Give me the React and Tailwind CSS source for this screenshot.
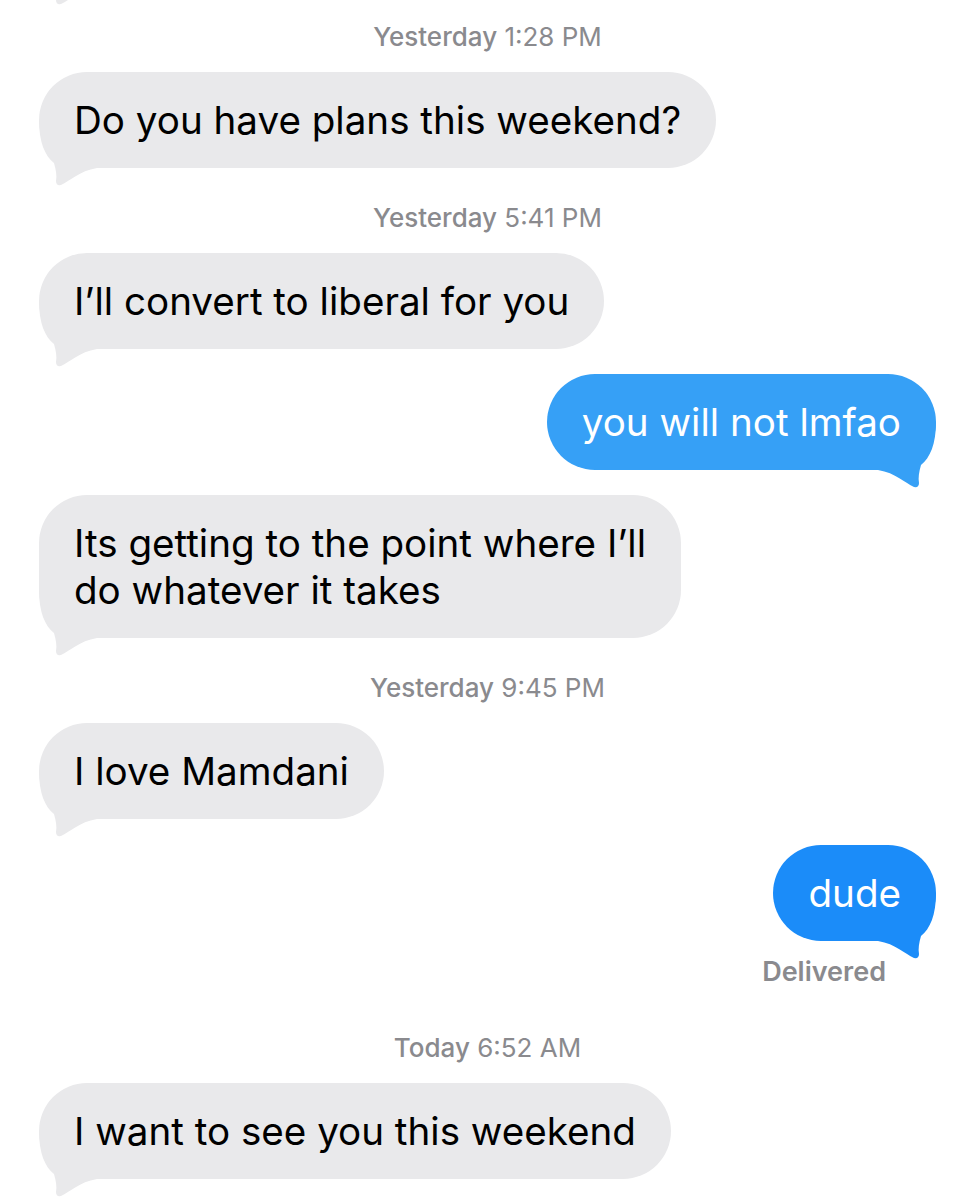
const font = { fontFamily: "Inter, 'Liberation Sans', sans-serif" };

function Tail({ side, color }) {
  const isRight = side === "right";
  return (
    <svg
      width="58"
      height="66"
      viewBox="0 0 58 66"
      className={`absolute bottom-[-18px] ${isRight ? "right-0" : "left-0"}`}
    >
      <path
        d="M0 0 C0 22 6 36 15 43 C17 50 18 56 17 61 Q17 66 22 65 C31 61 40 51 58 48 L58 0 Z"
        fill={color}
        transform={isRight ? "translate(58 0) scale(-1 1)" : undefined}
      />
    </svg>
  );
}

function Received({ children, className = "" }) {
  return (
    <div className={`relative self-start whitespace-nowrap rounded-[48px] bg-[#e9e9eb] px-[35px] py-[24.5px] text-[38.6px] leading-[47px] text-black ${className}`}>
      <Tail side="left" color="#e9e9eb" />
      <span className="relative">{children}</span>
    </div>
  );
}

function Sent({ children, fill, className = "" }) {
  return (
    <div
      className={`relative self-end whitespace-nowrap rounded-[48px] px-[35px] py-[24.5px] text-[38.6px] leading-[47px] text-white ${className}`}
    >
      <Tail side="right" color={fill} />
      <span className="relative">{children}</span>
    </div>
  );
}

function Stamp({ day, time, className = "" }) {
  return (
    <div className={`mt-[35px] mb-[20px] text-center text-[26px] leading-[30px] text-[#8a8a8e] ${className}`}>
      <span className="font-medium">{day}</span> <span>{time}</span>
    </div>
  );
}

export default function App() {
  return (
    <div className="min-h-[1200px] w-[975px] overflow-hidden bg-white" style={font}>
      <div className="flex flex-col px-[39px]">
        {/* previous message, scrolled mostly off screen */}
        <div className="relative mt-[-109px] h-[96px] w-[400px] rounded-[48px] bg-[#e9e9eb]">
          <Tail side="left" color="#e9e9eb" />
        </div>

        <Stamp day="Yesterday" time="1:28 PM" />
        <Received>Do you have plans this weekend?</Received>

        <Stamp day="Yesterday" time="5:41 PM" />
        <Received>I’ll convert to liberal for you</Received>

        <Sent fill="#36a0f6" className="mt-[25px] bg-[#36a0f6]">you will not lmfao</Sent>

        <Received className="mt-[25px]">
          Its getting to the point where I’ll
          <br />
          do whatever it takes
        </Received>

        <Stamp day="Yesterday" time="9:45 PM" />
        <Received>I love Mamdani</Received>

        <Sent fill="#1b8cf9" className="mt-[26px] bg-[#1b8cf9]">dude</Sent>
        <div className="mt-[16px] self-end mr-[50px] text-[27px] leading-[30px] font-semibold text-[#8a8a8e]">
          Delivered
        </div>

        <Stamp day="Today" time="6:52 AM" className="mt-[46px]" />
        <Received>I want to see you this weekend</Received>
      </div>
    </div>
  );
}
